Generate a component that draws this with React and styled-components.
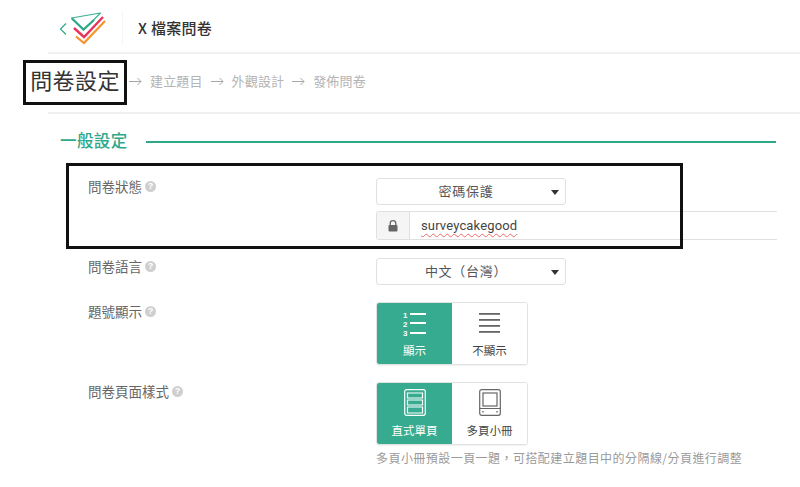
import React from "react";
import styled, { createGlobalStyle } from "styled-components";

const Global = createGlobalStyle`
  html, body { margin: 0; padding: 0; background: #fff; }
  body { font-family: "Noto Sans CJK TC", "Liberation Sans", sans-serif; color: #555; }
`;
const Page = styled.div`
  width: 800px; height: 487px; overflow: hidden; position: relative; background: #fff;
`;
const Header = styled.header`
  display: flex; align-items: center; height: 52px; margin-left: 48px;
  border-bottom: 2px solid #f0f0f0; box-sizing: content-box;
`;
const Back = styled.span`
  display: flex; margin-left: 11px; margin-right: 3px; margin-top: 5px;
`;
const Brand = styled.span`
  display: flex; margin-top: 3px; padding-right: 16px; height: 34px; border-right: 1px solid #f5f5f5; margin-right: 15px;
`;
const FormTitle = styled.h1`
  margin: 0; font-size: 15px; font-weight: 500; color: #333; letter-spacing: 0.3px; margin-top: 2px;
`;
const Steps = styled.nav`
  display: flex; align-items: center; height: 58px; padding-left: 23px;
`;
const ActiveStep = styled.strong`
  display: block; box-sizing: border-box; width: 104px; height: 45px; margin-top: -1px;
  border: 3px solid #111; font-size: 22px; font-weight: 400; color: #333; letter-spacing: 0.4px;
  line-height: 33px; text-align: center; white-space: nowrap; margin-right: 2px;
`;
const Step = styled.span`
  font-size: 13px; color: #b4b4b4; letter-spacing: 0.15px; margin: -5px 8px 0;
`;
const Arrow = styled.span`
  display: flex; margin-top: -4px;
`;
const Divider = styled.div`
  height: 2px; background: #f0f0f0; margin-left: 48px;
`;
const Section = styled.div`
  display: flex; align-items: center; gap: 18px; height: 54px; margin: 0 24px 10px 60px; padding-top: 1px; box-sizing: border-box;
`;
const SectionTitle = styled.h2`
  margin: -3px 0 0; font-size: 16.5px; font-weight: 500; color: #2fa88a; letter-spacing: 0.4px; white-space: nowrap;
`;
const SectionLine = styled.div`
  flex: 1; height: 2px; background: #2fa88a;
`;
const Row = styled.section`
  display: grid; grid-template-columns: 288px 1fr; padding-left: 88px; position: relative;
  margin-top: ${(p) => p.$top || 0}px;
`;
const Label = styled.div`
  display: flex; align-items: center; gap: 3px; height: 18px; font-size: 13.5px; color: #666; margin-top: ${(p) => p.$top || 0}px;
`;
const Help = styled.span`
  width: 11px; height: 11px; border-radius: 50%; background: #cfcfcf; color: #fff;
  font: 700 9px/11px "Liberation Sans", sans-serif; text-align: center;
`;
const Controls = styled.div`
  display: flex; flex-direction: column; gap: 6px; min-width: 0;
`;
const Select = styled.div`
  position: relative; box-sizing: border-box; width: 190px; height: 27px; border: 1px solid #e0e0e0; border-radius: 3px;
  font-size: 13px; line-height: 24px; text-align: center; color: #555; padding-right: 10px; letter-spacing: 0.7px;
  &::after { content: ""; position: absolute; right: 3px; top: 11px; border: 4px solid transparent; border-top: 5px solid #333; border-bottom: 0; margin-right: 3px; }
`;
const InputGroup = styled.div`
  display: flex; box-sizing: border-box; width: 401px; height: 29px; border: 1px solid #e0e0e0; border-right: 0; border-radius: 3px 0 0 3px;
`;
const Addon = styled.span`
  display: flex; align-items: center; justify-content: center; width: 32px; background: #f5f5f5; border-right: 1px solid #e0e0e0;
`;
const InputText = styled.span`
  font: 13px/27px "Roboto", "Liberation Sans", sans-serif; color: #444; padding-left: 11px; letter-spacing: 0.15px;
  text-decoration-line: underline; text-decoration-style: wavy; text-decoration-color: #f06a6a;
  text-decoration-thickness: 1px; text-underline-offset: 3px;
`;
const Annotation = styled.div`
  position: absolute; left: 66px; top: -15px; width: 617px; height: 86px; box-sizing: border-box; border: 3px solid #111; pointer-events: none;
`;
const Toggle = styled.div`
  display: flex; width: 152px; height: 63px; box-sizing: border-box; border: 1px solid #e2e2e2; border-radius: 3px; overflow: hidden;
  box-shadow: 0 1px 1px rgba(0,0,0,.06);
`;
const Option = styled.div`
  flex: 1; display: flex; flex-direction: column; align-items: center; justify-content: flex-end; padding-bottom: 6px;
  font-size: 11.5px; line-height: 16px; gap: 6px; white-space: nowrap;
  background: ${(p) => (p.$on ? "#37ab8f" : "#fff")}; color: ${(p) => (p.$on ? "#fff" : "#444")};
`;
const Hint = styled.p`
  margin: 4px 0 0; font-size: 12px; line-height: 18px; color: #9a9a9a; white-space: nowrap; letter-spacing: 0.45px;
`;

const Logo = () => (
  <svg width="36" height="34" viewBox="72 11 36 34" fill="none">
    <path d="M78 36.5 86 43 107 21" stroke="#f5922a" strokeWidth="2.2" />
    <path d="M76 28 86 37 105 17" stroke="#e8345a" strokeWidth="2.4" />
    <path d="M73.5 18 102.5 13 85.5 30Z" stroke="#3bb093" strokeWidth="1.2" fill="#fff" strokeLinejoin="round" />
    <path d="M74 18.5 85.5 29.5 96 20" stroke="#2fa88a" strokeWidth="2.2" />
  </svg>
);
const ArrowIcon = () => (
  <svg width="13" height="9" viewBox="0 0 13 9" fill="none" stroke="#a8a8a8" strokeWidth="1">
    <path d="M0 4.5h12M8.5 1l3.5 3.5L8.5 8" />
  </svg>
);
const ListNum = () => (
  <svg width="23" height="28" viewBox="0 0 23 28" fill="#fff" style={{ marginBottom: "-2px" }}>
    <text x="0" y="7.5" fontSize="8" fontWeight="700" fontFamily="Liberation Sans">1</text>
    <text x="0" y="16.5" fontSize="8" fontWeight="700" fontFamily="Liberation Sans">2</text>
    <text x="0" y="26" fontSize="8" fontWeight="700" fontFamily="Liberation Sans">3</text>
    <rect x="7" y="3" width="16" height="2" /><rect x="7" y="12" width="16" height="2" /><rect x="7" y="22" width="16" height="2" />
  </svg>
);
const ListPlain = () => (
  <svg width="21" height="26" viewBox="0 0 21 26" fill="#666">
    <rect y="3" width="21" height="1.8" /><rect y="9" width="21" height="1.8" /><rect y="15" width="21" height="1.8" /><rect y="21" width="21" height="1.8" />
  </svg>
);
const Single = () => (
  <svg width="22" height="27" viewBox="0 0 22 27" fill="none" stroke="#fff" strokeWidth="1.2">
    <rect x=".7" y=".7" width="20.6" height="25.6" rx="2" />
    <path d="M3.5 4h15v5h-15zM3.5 11h15v5h-15zM3.5 18h15v6h-15z" />
  </svg>
);
const Booklet = () => (
  <svg width="22" height="27" viewBox="0 0 22 27" fill="none" stroke="#666" strokeWidth="1.2">
    <rect x=".7" y=".7" width="20.6" height="25.6" rx="2" />
    <rect x="4" y="4" width="14" height="13" />
    <path d="M.7 19.5h20.6" strokeWidth="1" />
    <path d="M4 22v1.5M18 22v1.5" strokeWidth="1.4" />
  </svg>
);
const LockIcon = () => (
  <svg width="10" height="12" viewBox="0 0 10 12">
    <path d="M2.2 5V3.5a2.8 2.8 0 0 1 5.6 0V5" fill="none" stroke="#666" strokeWidth="1.3" />
    <rect x="0.5" y="5" width="9" height="6.5" rx="1" fill="#666" />
  </svg>
);

export default function App() {
  return (
    <Page>
      <Global />
      <Header>
        <Back>
          <svg width="8" height="14" viewBox="0 0 8 14" fill="none" stroke="#2fa88a" strokeWidth="1.2"><path d="M7 1.5 1.5 7 7 12.5" /></svg>
        </Back>
        <Brand><Logo /></Brand>
        <FormTitle>X 檔案問卷</FormTitle>
      </Header>
      <Steps>
        <ActiveStep>問卷設定</ActiveStep>
        <Arrow><ArrowIcon /></Arrow>
        <Step>建立題目</Step>
        <Arrow><ArrowIcon /></Arrow>
        <Step>外觀設計</Step>
        <Arrow><ArrowIcon /></Arrow>
        <Step>發佈問卷</Step>
      </Steps>
      <Divider />
      <Section>
        <SectionTitle>一般設定</SectionTitle>
        <SectionLine />
      </Section>
      <Row>
        <Label $top={-1}>問卷狀態 <Help>?</Help></Label>
        <Controls>
          <Select>密碼保護</Select>
          <InputGroup>
            <Addon><LockIcon /></Addon>
            <InputText>surveycakegood</InputText>
          </InputGroup>
        </Controls>
        <Annotation />
      </Row>
      <Row $top={18}>
        <Label $top={-1}>問卷語言 <Help>?</Help></Label>
        <Controls><Select>中文（台灣）</Select></Controls>
      </Row>
      <Row $top={17}>
        <Label>題號顯示 <Help>?</Help></Label>
        <Toggle>
          <Option $on><ListNum />顯示</Option>
          <Option><ListPlain />不顯示</Option>
        </Toggle>
      </Row>
      <Row $top={17}>
        <Label>問卷頁面樣式 <Help>?</Help></Label>
        <Controls>
          <Toggle>
            <Option $on><Single />直式單頁</Option>
            <Option><Booklet />多頁小冊</Option>
          </Toggle>
        </Controls>
      </Row>
      <Row>
        <span />
        <Hint>多頁小冊預設一頁一題，可搭配建立題目中的分隔線/分頁進行調整</Hint>
      </Row>
    </Page>
  );
}
